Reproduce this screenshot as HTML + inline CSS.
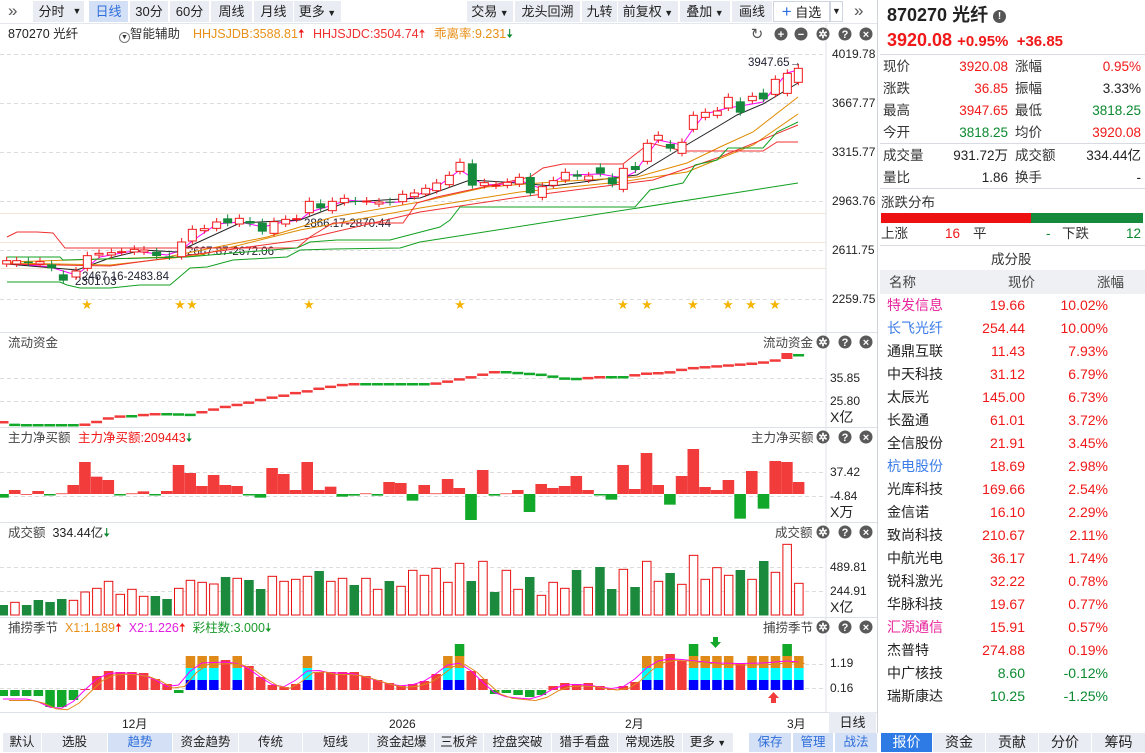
<!DOCTYPE html>
<html><head><meta charset="utf-8">
<style>
*{margin:0;padding:0;box-sizing:border-box}
body{width:1145px;height:752px;overflow:hidden;background:#fff;position:relative;font-family:"Liberation Sans","Noto Sans CJK SC",sans-serif;font-size:13px;color:#222}
.a{position:absolute;white-space:nowrap;line-height:16px}
.btn{position:absolute;top:1px;height:21px;background:#e9ecf2;line-height:21px;text-align:center;font-size:13px;color:#222}
.tab{position:absolute;top:733px;height:19px;background:#e9ecf2;line-height:19px;text-align:center;font-size:12.5px;color:#222}
.r{color:#f01818}.g{color:#0a8a30}
.lbl{position:absolute;left:883px;font-size:13.5px;color:#333;line-height:16px}
.v1{position:absolute;width:80px;left:928px;text-align:right;font-size:13.5px;line-height:16px}
.l2{position:absolute;left:1015px;font-size:13.5px;color:#333;line-height:16px}
.v2{position:absolute;width:80px;left:1061px;text-align:right;font-size:13.5px;line-height:16px}
</style></head><body>

<!-- top toolbar -->
<div class="a" style="left:8px;top:3px;font-size:17px;color:#555">»</div>
<div class="btn" style="left:33px;width:37px">分时</div>
<div class="btn" style="left:70px;width:14px;font-size:9px">▼</div>
<div class="btn" style="left:89px;width:39px;background:#d4e0f5;color:#2f6fdc">日线</div>
<div class="btn" style="left:130px;width:38px">30分</div>
<div class="btn" style="left:170px;width:39px">60分</div>
<div class="btn" style="left:211px;width:41px">周线</div>
<div class="btn" style="left:254px;width:39px">月线</div>
<div class="btn" style="left:294px;width:47px">更多<span style="font-size:9px"> ▼</span></div>
<div class="btn" style="left:467px;width:46px">交易<span style="font-size:9px"> ▼</span></div>
<div class="btn" style="left:515px;width:65px">龙头回溯</div>
<div class="btn" style="left:582px;width:35px">九转</div>
<div class="btn" style="left:618px;width:60px">前复权<span style="font-size:9px"> ▼</span></div>
<div class="btn" style="left:680px;width:50px">叠加<span style="font-size:9px"> ▼</span></div>
<div class="btn" style="left:732px;width:40px">画线</div>
<div class="btn" style="left:773px;width:57px;background:#fff;border:1px solid #cfd6e2;line-height:19px"><span style="color:#2f6fdc;font-size:17px">+</span> 自选</div>
<div class="btn" style="left:830px;width:13px;background:#fff;border:1px solid #cfd6e2;font-size:9px;line-height:19px">▼</div>
<div class="a" style="left:854px;top:3px;font-size:17px;color:#555">»</div>
<div class="a" style="left:0;top:23px;width:877px;height:1px;background:#e3e6ec"></div>

<!-- header line -->
<div class="a" style="left:8px;top:26px;font-size:12.5px">870270 光纤</div>
<div class="a" style="left:119px;top:26px;font-size:12.5px;color:#333"><span style="display:inline-block;width:11px;height:11px;border:1px solid #777;border-radius:50%;font-size:7px;line-height:9px;text-align:center;vertical-align:-1px">▼</span>智能辅助</div>
<div class="a" style="left:193px;top:26px;font-size:12.5px;color:#e8901a">HHJSJDB:3588.81<span class="r">🠅</span></div>
<div class="a" style="left:313px;top:26px;font-size:12.5px;color:#f03030">HHJSJDC:3504.74<span>🠅</span></div>
<div class="a" style="left:434px;top:26px;font-size:12.5px;color:#e8901a">乖离率:9.231<span class="g">🠇</span></div>

<!-- panel labels -->
<div class="a" style="left:8px;top:335px;font-size:12.5px;color:#444">流动资金</div>
<div class="a" style="left:763px;top:335px;font-size:12.5px;color:#444">流动资金</div>
<div class="a" style="left:8px;top:430px;font-size:12.5px;color:#444">主力净买额 <span style="color:#f01818;margin-left:4px">主力净买额:209443</span><span class="g">🠇</span></div>
<div class="a" style="left:751px;top:430px;font-size:12.5px;color:#444">主力净买额</div>
<div class="a" style="left:8px;top:525px;font-size:12.5px;color:#444">成交额 &nbsp;<span style="color:#222">334.44亿</span><span class="g">🠇</span></div>
<div class="a" style="left:775px;top:525px;font-size:12.5px;color:#444">成交额</div>
<div class="a" style="left:8px;top:620px;font-size:12.5px;color:#444">捕捞季节 &nbsp;<span style="color:#e8901a">X1:1.189<span class="r">🠅</span></span> &nbsp;<span style="color:#e020e0">X2:1.226<span class="r">🠅</span></span> &nbsp;<span style="color:#1a9a2a">彩柱数:3.000<span>🠇</span></span></div>
<div class="a" style="left:763px;top:620px;font-size:12.5px;color:#444">捕捞季节</div>

<!-- axis labels -->
<div class="a" style="left:832px;top:46px;font-size:12px">4019.78</div>
<div class="a" style="left:832px;top:95px;font-size:12px">3667.77</div>
<div class="a" style="left:832px;top:144px;font-size:12px">3315.77</div>
<div class="a" style="left:832px;top:193px;font-size:12px">2963.76</div>
<div class="a" style="left:832px;top:242px;font-size:12px">2611.75</div>
<div class="a" style="left:832px;top:291px;font-size:12px">2259.75</div>
<div class="a" style="left:830px;top:370px;font-size:12px">35.85</div>
<div class="a" style="left:830px;top:393px;font-size:12px">25.80</div>
<div class="a" style="left:830px;top:409px;font-size:14px">X亿</div>
<div class="a" style="left:830px;top:464px;font-size:12px">37.42</div>
<div class="a" style="left:830px;top:488px;font-size:12px">-4.84</div>
<div class="a" style="left:830px;top:504px;font-size:14px">X万</div>
<div class="a" style="left:830px;top:559px;font-size:12px">489.81</div>
<div class="a" style="left:830px;top:583px;font-size:12px">244.91</div>
<div class="a" style="left:830px;top:599px;font-size:14px">X亿</div>
<div class="a" style="left:830px;top:655px;font-size:12px">1.19</div>
<div class="a" style="left:830px;top:680px;font-size:12px">0.16</div>

<!-- chart annotations -->
<div class="a" style="left:748px;top:55px;font-size:11.5px;color:#223">3947.65→</div>
<div class="a" style="left:304px;top:216px;font-size:11.5px;color:#223">2866.17-2870.44</div>
<div class="a" style="left:187px;top:244px;font-size:11.5px;color:#223">2667.87-2672.06</div>
<div class="a" style="left:82px;top:269px;font-size:11.5px;color:#223">2467.16-2483.84</div>
<div class="a" style="left:75px;top:274px;font-size:11.5px;color:#223">2301.03</div>

<svg class="a" style="left:0;top:0" width="877" height="733" id="sv"></svg>

<!-- month axis -->
<div class="a" style="left:122px;top:716px;font-size:12px">12月</div>
<div class="a" style="left:389px;top:716px;font-size:12px">2026</div>
<div class="a" style="left:625px;top:716px;font-size:12px">2月</div>
<div class="a" style="left:787px;top:716px;font-size:12px">3月</div>
<div class="a" style="left:829px;top:712px;width:47px;height:21px;background:#e9ecf2;text-align:center;line-height:21px;font-size:13px">日线</div>

<!-- bottom tabs -->
<div class="tab" style="left:3px;width:38px">默认</div>
<div class="tab" style="left:42px;width:65px">选股</div>
<div class="tab" style="left:108px;width:64px;background:#d4e0f5;color:#2f6fdc">趋势</div>
<div class="tab" style="left:173px;width:65px">资金趋势</div>
<div class="tab" style="left:239px;width:63px">传统</div>
<div class="tab" style="left:303px;width:65px">短线</div>
<div class="tab" style="left:369px;width:65px">资金起爆</div>
<div class="tab" style="left:435px;width:48px">三板斧</div>
<div class="tab" style="left:484px;width:67px">控盘突破</div>
<div class="tab" style="left:552px;width:65px">猎手看盘</div>
<div class="tab" style="left:618px;width:64px">常规选股</div>
<div class="tab" style="left:683px;width:50px">更多<span style="font-size:9px"> ▼</span></div>
<div class="tab" style="left:749px;width:42px;background:#d4e0f5;color:#2f6fdc">保存</div>
<div class="tab" style="left:793px;width:40px;background:#d4e0f5;color:#2f6fdc">管理</div>
<div class="tab" style="left:835px;width:42px;background:#d4e0f5;color:#2f6fdc">战法</div>
<div class="tab" style="left:881px;width:51px;background:#2f7be6;color:#fff;font-size:14px">报价</div>
<div class="tab" style="left:933px;width:52px;font-size:14px">资金</div>
<div class="tab" style="left:986px;width:52px;font-size:14px">贡献</div>
<div class="tab" style="left:1039px;width:52px;font-size:14px">分价</div>
<div class="tab" style="left:1092px;width:53px;font-size:14px">筹码</div>

<!-- right panel -->
<div class="a" style="left:877px;top:0;width:1px;height:733px;background:#cfd3da"></div>
<div class="a" style="left:887px;top:4px;font-size:18px;line-height:22px;font-weight:bold;color:#222">870270 光纤 <span style="display:inline-block;width:13px;height:13px;border-radius:50%;background:#555;color:#fff;font-size:10px;line-height:13px;text-align:center;vertical-align:2px">!</span></div>
<div class="a" style="left:887px;top:29px;font-size:18px;line-height:22px;font-weight:bold;color:#f01818">3920.08 <span style="font-size:15px">+0.95% &nbsp;+36.85</span></div>
<div class="a" style="left:880px;top:54px;width:265px;height:1px;background:#d8dbe2"></div>
<div class="lbl" style="top:59px">现价</div><div class="v1 r" style="top:59px">3920.08</div><div class="l2" style="top:59px">涨幅</div><div class="v2 r" style="top:59px">0.95%</div>
<div class="lbl" style="top:81px">涨跌</div><div class="v1 r" style="top:81px">36.85</div><div class="l2" style="top:81px">振幅</div><div class="v2" style="top:81px">3.33%</div>
<div class="lbl" style="top:103px">最高</div><div class="v1 r" style="top:103px">3947.65</div><div class="l2" style="top:103px">最低</div><div class="v2 g" style="top:103px">3818.25</div>
<div class="lbl" style="top:125px">今开</div><div class="v1 g" style="top:125px">3818.25</div><div class="l2" style="top:125px">均价</div><div class="v2 r" style="top:125px">3920.08</div>
<div class="a" style="left:880px;top:143px;width:265px;height:1px;background:#d8dbe2"></div>
<div class="lbl" style="top:148px">成交量</div><div class="v1" style="top:148px">931.72万</div><div class="l2" style="top:148px">成交额</div><div class="v2" style="top:148px">334.44亿</div>
<div class="lbl" style="top:170px">量比</div><div class="v1" style="top:170px">1.86</div><div class="l2" style="top:170px">换手</div><div class="v2" style="top:170px">-</div>
<div class="a" style="left:880px;top:188px;width:265px;height:1px;background:#d8dbe2"></div>
<div class="a" style="left:881px;top:195px;font-size:13.5px;color:#333">涨跌分布</div>
<div class="a" style="left:881px;top:213px;width:150px;height:10px;background:#ee1111"></div>
<div class="a" style="left:1031px;top:213px;width:112px;height:10px;background:#168a3c"></div>
<div class="a" style="left:881px;top:226px;font-size:13.5px;color:#333">上涨</div>
<div class="a r" style="left:945px;top:226px;font-size:13.5px">16</div>
<div class="a" style="left:973px;top:226px;font-size:13.5px;color:#333">平</div>
<div class="a g" style="left:1046px;top:226px;font-size:13.5px">-</div>
<div class="a" style="left:1062px;top:226px;font-size:13.5px;color:#333">下跌</div>
<div class="a g" style="left:1126px;top:226px;font-size:13.5px">12</div>
<div class="a" style="left:880px;top:245px;width:265px;height:1px;background:#d8dbe2"></div>
<div class="a" style="left:991px;top:252px;font-size:13.5px;color:#333">成分股</div>
<div class="a" style="left:880px;top:270px;width:265px;height:24px;background:#eef0f4"></div>
<div class="a" style="left:889px;top:275px;font-size:13.5px;color:#444">名称</div>
<div class="a" style="left:1008px;top:275px;font-size:13.5px;color:#444">现价</div>
<div class="a" style="left:1097px;top:275px;font-size:13.5px;color:#444">涨幅</div>
<div id="tbl"></div>

<script>
var rows=[["特发信息","19.66","10.02%","#e8259a"],["长飞光纤","254.44","10.00%","#3b7de8"],["通鼎互联","11.43","7.93%"],["中天科技","31.12","6.79%"],["太辰光","145.00","6.73%"],["长盈通","61.01","3.72%"],["全信股份","21.91","3.45%"],["杭电股份","18.69","2.98%","#3b7de8"],["光库科技","169.66","2.54%"],["金信诺","16.10","2.29%"],["致尚科技","210.67","2.11%"],["中航光电","36.17","1.74%"],["锐科激光","32.22","0.78%"],["华脉科技","19.67","0.77%"],["汇源通信","15.91","0.57%","#e8259a"],["杰普特","274.88","0.19%"],["中广核技","8.60","-0.12%"],["瑞斯康达","10.25","-1.25%"]];
var h="";
rows.forEach(function(r,i){var y=297+i*23;var c=r[2][0]=="-"?"#0a8a30":"#f01818";
h+='<div class="a" style="left:887px;top:'+y+'px;font-size:14px;color:'+(r[3]||"#222")+'">'+r[0]+'</div>';
h+='<div class="a" style="left:951px;width:74px;text-align:right;top:'+y+'px;font-size:14px;color:'+c+'">'+r[1]+'</div>';
h+='<div class="a" style="left:1040px;width:68px;text-align:right;top:'+y+'px;font-size:14px;color:'+c+'">'+r[2]+'</div>';});
document.getElementById("tbl").innerHTML=h;

var S=document.getElementById("sv"),NS="http://www.w3.org/2000/svg";
function el(t,a){var e=document.createElementNS(NS,t);for(var k in a)e.setAttribute(k,a[k]);S.appendChild(e);return e;}
function R(x,y,w,h,f,s){el("rect",{x:x,y:y,width:w,height:Math.max(h,0.8),fill:f||"none",stroke:s||"none","stroke-width":1});}
function L(x1,y1,x2,y2,c,d){el("line",{x1:x1,y1:y1,x2:x2,y2:y2,stroke:c,"stroke-width":1,"stroke-dasharray":d||""});}
function P(pts,c,w){el("polyline",{points:pts.map(function(p){return p.join(",")}).join(" "),fill:"none",stroke:c,"stroke-width":w||1});}
L(826,24,826,712,"#dde1e8");
[332,427,522,617,712].forEach(function(y){L(0,y+.5,877,y+.5,"#dde1e8");});
[54,103,152,201,250,299].forEach(function(y){L(0,y+.5,826,y+.5,"#dcdcdc","4,3");});
[378,401,472,496,567,591,664,688].forEach(function(y){L(0,y+.5,826,y+.5,"#dcdcdc","4,3");});
[213,242,268].forEach(function(y){L(0,y+.5,826,y+.5,"#f3e6d8");});
function icon(x,y,t){el("circle",{cx:x,cy:y,r:6.5,fill:"#5a5a5a"});var e=el("text",{x:x,y:y+4,"font-size":"11","text-anchor":"middle",fill:"#fff","font-family":"Liberation Sans","font-weight":"bold"});e.textContent=t;}
icon(781,34,"+");icon(801,34,"−");icon(823,34,"✲");icon(845,34,"?");icon(866,34,"×");
var e=el("text",{x:757,y:39,"font-size":"15","text-anchor":"middle",fill:"#555","font-family":"DejaVu Sans"});e.textContent="↻";
[342,437,532,627].forEach(function(y){icon(823,y,"✲");icon(845,y,"?");icon(866,y,"×");});
P([[7,263],[50,267],[76,275],[87,267],[100,257],[133,251],[167,255],[182,250],[192,241],[217,224],[240,222],[263,227],[283,222],[300,220],[310,212],[333,205],[347,200],[380,203],[400,202],[437,187],[460,170],[484,185],[507,184],[519,180],[542,189],[565,175],[600,174],[623,178],[635,172],[658,140],[682,145],[693,129],[705,114],[728,108],[752,104],[763,102],[787,73],[798,70]],"#ff00ff");
P([[7,264],[77,270],[110,258],[143,250],[177,252],[240,223],[300,220],[347,202],[420,198],[470,180],[503,182],[553,186],[620,177],[637,175],[683,147],[717,127],[737,115],[763,104],[798,83]],"#222");
P([[7,262],[167,257],[267,237],[333,217],[420,202],[487,187],[553,182],[637,177],[687,163],[720,147],[753,132],[798,97]],"#e08a00");
P([[7,263],[110,265],[200,255],[300,230],[420,208],[520,192],[620,182],[687,172],[753,145],[798,114]],"#e08a00");
P([[7,237],[17,232],[37,232],[53,233],[65,248],[297,248],[310,237],[333,223],[403,223],[417,203],[437,197],[530,177],[543,168],[563,164],[623,164],[637,153],[650,143],[683,151],[763,151],[777,142],[798,142]],"#f03030");
P([[7,264],[110,266],[300,240],[420,212],[520,197],[653,180],[720,157],[798,125]],"#f03030");
P([[7,257],[60,257],[63,260],[187,257],[233,253],[297,248],[310,242],[337,240],[390,240],[440,227],[450,220],[460,207],[635,207],[650,190],[683,183],[695,165],[717,160],[728,148],[763,148],[777,132],[798,122]],"#10a020");
P([[7,282],[60,282],[67,285],[80,288],[110,288],[140,285],[170,285],[190,268],[207,267],[233,260],[287,257],[300,250],[333,249],[400,248],[420,242],[798,183]],"#10a020");
var c5=[[20,662,672,'r'],[50,662,672,'r'],[85,665,669,'g'],[120,665,672,'r'],[155,673,685,'g'],[190,703,722,'g'],[228,693,711,'r'],[262,647,685,'r'],[297,640,645,'r'],[334,638,645,'r'],[365,635,637,'r'],[403,628,636,'r'],[432,630,636,'r'],[470,635,648,'g'],[508,649,651,'g'],[545,606,650,'r'],[577,568,603,'r'],[613,566,572,'r'],[650,546,565,'r'],[683,535,550,'g'],[718,535,552,'r'],[750,543,551,'g'],[787,548,575,'g'],[822,545,580,'r'],[857,538,552,'r'],[890,536,538,'r'],[928,484,518,'r'],[962,490,505,'g'],[997,484,512,'r'],[1033,475,488,'r'],[1066,483,486,'g'],[1100,483,486,'r'],[1137,486,492,'r'],[1170,485,488,'g'],[1208,463,485,'r'],[1243,459,470,'r'],[1277,445,462,'r'],[1310,429,452,'r']];
var c6=[[88,406,434,'r'],[120,367,394,'r'],[157,370,437,'g'],[193,428,437,'r'],[228,436,438,'r'],[262,427,436,'r'],[298,412,432,'r'],[331,411,460,'g'],[367,440,472,'r'],[400,422,436,'r'],[436,397,420,'r'],[472,403,410,'g'],[506,408,420,'r'],[541,382,401,'g'],[577,412,433,'g'],[610,385,448,'r'],[646,378,390,'g'],[682,310,364,'r'],[715,286,300,'r'],[751,312,326,'g'],[786,307,340,'r'],[820,226,268,'r'],[856,217,232,'r'],[892,213,226,'r'],[925,172,204,'r'],[961,184,218,'g'],[997,169,182,'r'],[1030,158,178,'g'],[1066,118,163,'r'],[1102,100,160,'r'],[1135,85,127,'r']];
var cs=c5.map(function(c){return [c[0]/3,40+c[1]/3,40+c[2]/3,c[3]]}).concat(c6.map(function(c){return [420+c[0]/3,40+c[1]/3,40+c[2]/3,c[3]]}));
cs.forEach(function(c){var col=c[3]=='r'?"#f01818":"#168a3c";L(c[0],c[1]-4,c[0],c[2]+3,col);
 if(c[3]=='r')R(c[0]-4,c[1],8,c[2]-c[1],"#fff",col);else R(c[0]-4.5,c[1],9,c[2]-c[1],col);});
[87,180,192,309,460,623,647,693,728,751,775].forEach(function(x){var t=el("text",{x:x,y:309,"font-size":"13","text-anchor":"middle",fill:"#f5b400","font-family":"DejaVu Sans"});t.textContent="★";});
function X(i){return 3+11.7*i;}
var lq=[421,424,424,424,424,424,424,421,417,415,415,413,413,413,414,411,408,405,403,400,397,395,392,390,387,385,383,383,383,383,383,383,383,382,379,377,374,371,371,372,373,374,377,378,377,376,376,376,373,372,372,369,367,366,365,364,363,362,360,357,355];
var n=lq.length;
for(var i=0;i<69;i++){var f=i*(n-1)/68,a=Math.floor(f),b=Math.min(a+1,n-1),v=lq[a]+(lq[b]-lq[a])*(f-a);
 var pf=(i-1)*(n-1)/68,pa=Math.max(Math.floor(pf),0),pb=Math.min(pa+1,n-1),pv=i?lq[pa]+(lq[pb]-lq[pa])*(pf-pa):v+1;
 var col=v<pv-0.4?"#f23c3c":"#12a82a"; if(i==67)v=355; if(i==68){v=354;col="#12a82a";}
 if(i==67){R(X(i)-5.5,v-2,11,6,"#f23c3c");continue;}
 R(X(i)-5.5,v,11,2.5,col);}
var nb=[['g',503],['r',480],['r',492],['r',483],['g',494],['r',490],['r',465],['r',396],['r',440],['r',450],['g',494],['r',490],['r',484],['g',494],['r',483],['r',405],['r',429],['r',468],['r',435],['r',465],['r',468],['g',494],['g',503],['r',414],['r',432],['r',480],['r',396],['r',480],['r',470],['g',500],['g',497],['r',490],['g',497],['r',456],['r',459],['g',512],['r',465],['r',490],['r',447],['r',474],['g',570],['r',420],['g',497],['r',490],['r',480],['g',546],['r',462],['r',474],['r',468],['r',438],['r',480],['g',492],['g',509],['r',405],['r',477],['r',369],['r',465],['g',524],['r',438],['r',357],['r',471],['r',480],['r',450],['g',566],['r',423],['g',536],['r',393],['r',396],['r',456]];
var base=494;
nb.forEach(function(d,i){var y=330+d[1]/3;if(d[0]=='r')R(X(i)-5.8,y,11.6,base-y,"#f23c3c");else R(X(i)-5.8,base,11.6,Math.max(y-base,1.5),"#12a82a");});
var vol=[[255,'g'],[247,'r'],[255,'g'],[240,'g'],[246,'g'],[237,'g'],[241,'r'],[216,'r'],[205,'r'],[184,'r'],[223,'r'],[208,'r'],[229,'r'],[228,'g'],[237,'g'],[205,'r'],[181,'r'],[187,'r'],[192,'r'],[171,'g'],[175,'r'],[180,'g'],[207,'g'],[169,'r'],[184,'r'],[178,'r'],[169,'r'],[153,'g'],[184,'r'],[175,'r'],[195,'g'],[175,'r'],[208,'r'],[183,'g'],[199,'r'],[151,'r'],[166,'r'],[145,'r'],[187,'r'],[130,'r'],[183,'g'],[124,'r'],[216,'g'],[151,'r'],[208,'r'],[171,'g'],[226,'r'],[187,'r'],[205,'r'],[150,'g'],[202,'r'],[141,'g'],[207,'g'],[148,'r'],[201,'g'],[124,'r'],[184,'r'],[159,'g'],[193,'r'],[106,'r'],[178,'r'],[143,'r'],[166,'r'],[150,'g'],[178,'r'],[123,'g'],[157,'r'],[73,'r'],[190,'r']];
vol.forEach(function(d,i){var y=520+d[0]/3;if(d[1]=='r')R(X(i)-4,y,8.5,615-y,"#fff","#e81010");else R(X(i)-4.5,y,9.5,615.5-y,"#1b8a3c");});
var fs=[['g',696],['g',696],['g',696],['g',696],['g',707],['g',707],['g',700],['r',689],['r',676],['r',671],['r',672],['r',672],['r',673],['r',679],['r',684],['g',693],['s'],['s'],['s'],['r',660],['s'],['r',666],['r',677],['r',685],['r',687],['r',684],['s'],['r',672],['r',672],['r',672],['r',672],['r',676],['r',680],['r',683],['r',686],['r',684],['r',681],['r',674],['s'],['sg'],['r',671],['r',679],['g',694],['g',693],['g',695],['g',697],['g',695],['r',686],['r',683],['r',684],['r',683],['r',686],['r',689],['r',686],['r',682],['s'],['s'],['r',654],['r',661],['sg'],['s'],['s'],['s'],['r',663],['s'],['s'],['s'],['sg'],['s']];
var zb=690,ly=[];
fs.forEach(function(d,i){var x=X(i)-4.5,w=9.5;
 if(d[0]=='g'){R(x,zb,w,d[1]-zb,"#12a82a");ly.push(d[1]+3);}
 else if(d[0]=='r'){R(x,d[1],w,zb-d[1],"#f23c3c");ly.push(d[1]+1);}
 else{R(x,680,w,10,"#0000ff");R(x,668,w,12,"#00ffff");R(x,656,w,12,"#e08a1a");if(d[0]=='sg')R(x,644,w,12,"#12a82a");ly.push(d[0]=='sg'?659:663);}});
var sm=ly.map(function(v,i){var a=ly[Math.max(i-1,0)],b=ly[Math.min(i+1,68)];return (a+2*v+b)/4;});
P(sm.map(function(v,i){return [X(i),v];}),"#ff00ff");
P(sm.map(function(v,i){return [X(i)+6,v+1.5];}),"#e08a1a");
el("path",{d:"M713,637 h5 v5 h3 l-5.5,6 l-5.5,-6 h3z",fill:"#12a82a"});
el("path",{d:"M771,703 h5 v-5 h3 l-5.5,-6 l-5.5,6 h3z",fill:"#f23c3c"});
</script>
</body></html>
